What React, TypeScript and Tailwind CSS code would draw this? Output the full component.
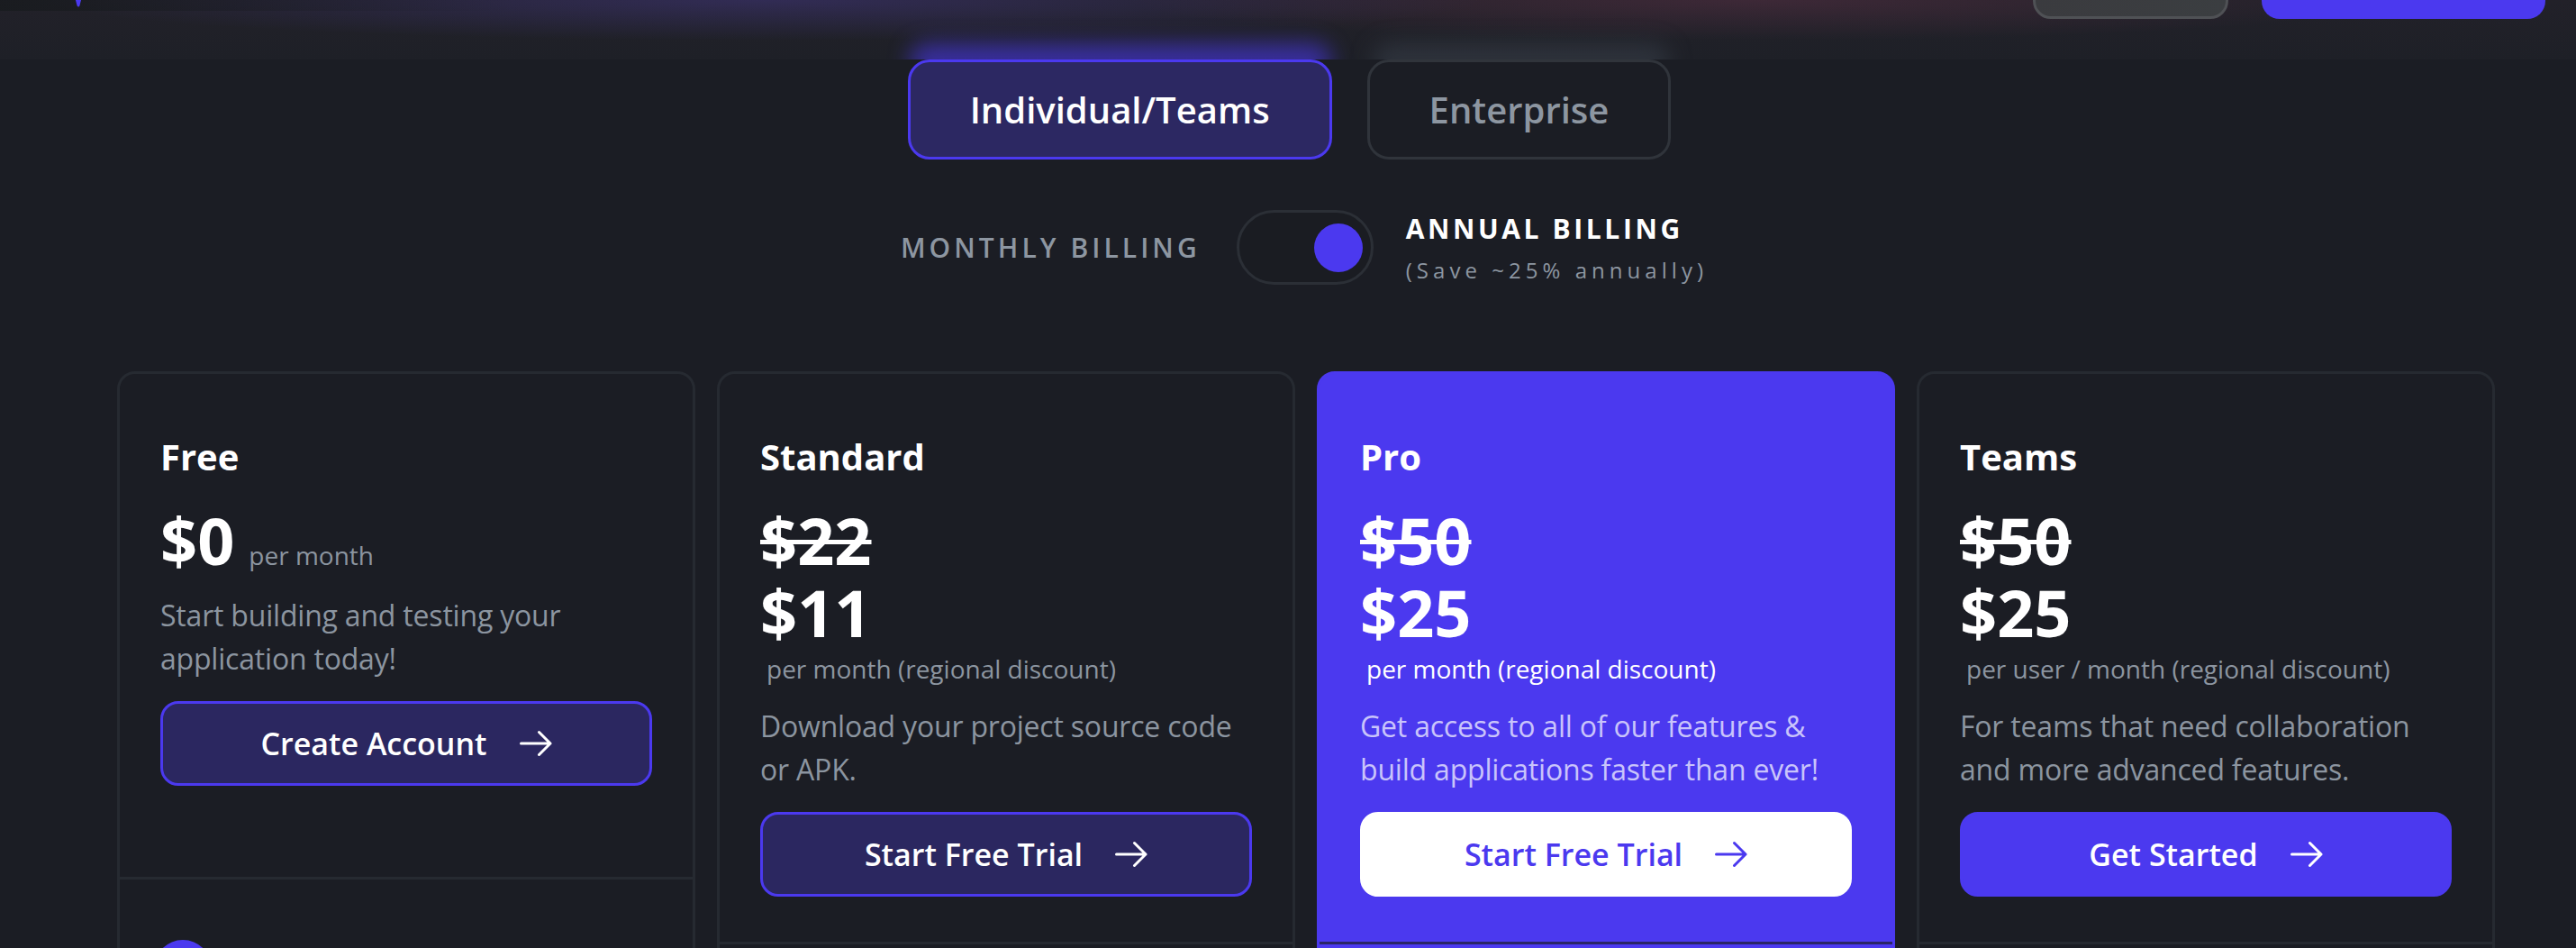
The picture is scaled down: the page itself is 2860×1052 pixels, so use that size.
import React from "react";

const Arrow = ({ className }: { className?: string }) => (
  <svg width="36" height="30" viewBox="0 0 36 30" fill="none" className={className}>
    <path
      d="M1.5 15H34M21.5 2.5L34 15L21.5 27.5"
      stroke="currentColor"
      strokeWidth="3"
      strokeLinecap="round"
      strokeLinejoin="round"
    />
  </svg>
);

type Plan = {
  name: string;
  old?: string;
  price: string;
  unit: string;
  desc: [string, string];
  cta: string;
  variant: "outline" | "white" | "solid";
  highlight?: boolean;
  inline?: boolean;
};

const plans: Plan[] = [
  {
    name: "Free",
    price: "$0",
    unit: "per month",
    desc: ["Start building and testing your", "application today!"],
    cta: "Create Account",
    variant: "outline",
    inline: true,
  },
  {
    name: "Standard",
    old: "$22",
    price: "$11",
    unit: "per month (regional discount)",
    desc: ["Download your project source code", "or APK."],
    cta: "Start Free Trial",
    variant: "outline",
  },
  {
    name: "Pro",
    old: "$50",
    price: "$25",
    unit: "per month (regional discount)",
    desc: ["Get access to all of our features &", "build applications faster than ever!"],
    cta: "Start Free Trial",
    variant: "white",
    highlight: true,
  },
  {
    name: "Teams",
    old: "$50",
    price: "$25",
    unit: "per user / month (regional discount)",
    desc: ["For teams that need collaboration", "and more advanced features."],
    cta: "Get Started",
    variant: "solid",
  },
];

function Card({ p }: { p: Plan }) {
  const hl = p.highlight;
  const btn =
    p.variant === "outline"
      ? "border-[3px] border-[#4b39ef] bg-[#2b2760] text-white"
      : p.variant === "white"
      ? "border-[3px] border-white bg-white text-[#4b39ef]"
      : "border-[3px] border-[#4b39ef] bg-[#4b39ef] text-white";
  return (
    <div
      className={
        hl
          ? "flex flex-col rounded-[20px] border-[3px] border-[#4b39ef] bg-[#4b39ef]"
          : "flex flex-col rounded-[20px] border-[3px] border-[#262a31] bg-[#1b1d24]"
      }
    >
      <div className={p.inline ? "px-[45px] pt-[64px] pb-[101px]" : "px-[45px] pt-[64px] pb-[50px]"}>
        <div className="text-[40px] font-bold leading-[56px] text-white">{p.name}</div>
        {p.inline ? (
          <div className="mt-[24px] flex h-[80px] items-baseline">
            <span className="text-[72px] font-bold leading-[80px] text-white">{p.price}</span>
            <span className="ml-[16px] text-[28px] leading-[40px] text-[#8c95a0]">{p.unit}</span>
          </div>
        ) : (
          <div className="mt-[24px] flex flex-col">
            <s className="block h-[80px] text-[72px] font-bold leading-[80px] text-white decoration-[5px]">
              {p.old}
            </s>
            <span className="block h-[80px] text-[72px] font-bold leading-[80px] text-white">{p.price}</span>
            <span
              className={
                hl
                  ? "mt-[3px] ml-[7px] text-[28px] leading-[40px] text-white"
                  : "mt-[3px] ml-[7px] text-[28px] leading-[40px] text-[#8c95a0]"
              }
            >
              {p.unit}
            </span>
          </div>
        )}
        <p
          className={
            hl
              ? "mt-[20px] text-[32px] leading-[48px] tracking-[-0.2px] text-[#c9c4fb]"
              : "mt-[20px] text-[32px] leading-[48px] tracking-[-0.2px] text-[#8c95a0]"
          }
        >
          {p.desc[0]}
          <br />
          {p.desc[1]}
        </p>
        <button
          className={
            "mt-[23px] flex h-[94px] w-full items-center justify-center gap-[36px] rounded-[20px] text-[34px] font-semibold " +
            btn
          }
        >
          <span>{p.cta}</span>
          <Arrow />
        </button>
      </div>
      <div
        className={
          hl
            ? "flex-1 border-t-[3px] border-[#2a2566] px-[45px] pt-[67px]"
            : "flex-1 border-t-[3px] border-[#262a31] px-[45px] pt-[67px]"
        }
      >
        <div
          className={
            hl
              ? "ml-[-7px] h-[64px] w-[64px] rounded-full bg-white"
              : "ml-[-7px] h-[64px] w-[64px] rounded-full bg-[#4b39ef]"
          }
        />
      </div>
    </div>
  );
}

export default function App() {
  return (
    <div className="h-[1052px] overflow-hidden bg-[#1b1d24] font-['Open_Sans',sans-serif]">
      <header className="relative h-[66px] overflow-hidden bg-[linear-gradient(to_bottom,#222129,#1e2027)]">
        <div className="pointer-events-none absolute inset-0 bg-[radial-gradient(ellipse_800px_45px_at_850px_0px,rgba(95,75,210,0.26),transparent),radial-gradient(ellipse_700px_45px_at_1950px_0px,rgba(170,70,110,0.2),transparent)]" />
        <div className="pointer-events-none absolute inset-x-0 top-0 h-[12px] bg-[linear-gradient(to_right,rgba(20,24,26,0.6),transparent_20%)]" />
        <div className="pointer-events-none absolute bottom-[-22px] left-[1010px] h-[40px] w-[468px] rounded-[20px] bg-[rgba(75,57,239,0.6)] blur-[12px]" />
        <div className="pointer-events-none absolute bottom-[-22px] left-[1524px] h-[40px] w-[330px] rounded-[20px] bg-[rgba(58,66,76,0.55)] blur-[12px]" />
        <div className="relative flex h-[21px] items-end justify-between pl-[78px] pr-[34px]">
          <svg width="18" height="40" viewBox="0 0 18 40" fill="none" className="mb-[13px]">
            <path d="M1.5 8L9 38L16.5 8" stroke="#4b39ef" strokeWidth="3" strokeLinecap="round" strokeLinejoin="round" />
          </svg>
          <div className="flex items-end gap-[37px]">
            <div className="h-[90px] w-[217px] rounded-[20px] border-[3px] border-[#4f5155] bg-[linear-gradient(135deg,#3a3a3e,#3b3e41)]" />
            <div className="h-[90px] w-[315px] rounded-[20px] bg-[#4b39ef]" />
          </div>
        </div>
      </header>

      <main>
        <div className="flex justify-center gap-[39px] pl-[3px]">
          <button className="h-[111px] rounded-[24px] border-[3px] border-[#4b39ef] bg-[#2c2862] px-[66px] text-[40px] font-semibold text-white">
            Individual/Teams
          </button>
          <button className="h-[111px] rounded-[24px] border-[3px] border-[#30343b] bg-[#1b1d24] px-[66px] text-[40px] font-semibold text-[#8d96a1]">
            Enterprise
          </button>
        </div>

        <div className="mt-[56px] flex items-center justify-center pl-[36px]">
          <span className="text-[30px] font-semibold leading-[40px] tracking-[0.135em] text-[#8d96a1]">
            MONTHLY BILLING
          </span>
          <div className="ml-[40px] flex h-[83px] w-[152px] items-center justify-end rounded-full border-[3px] border-[#2b2f36] bg-[#1a1c22] pr-[9px]">
            <div className="h-[54px] w-[54px] rounded-full bg-[#4b39ef]" />
          </div>
          <div className="ml-[36px] flex flex-col">
            <span className="text-[30px] font-bold leading-[40px] tracking-[0.12em] text-white">ANNUAL BILLING</span>
            <span className="mt-[10px] text-[24px] leading-[32px] tracking-[0.21em] text-[#8d96a1]">
              (Save ~25% annually)
            </span>
          </div>
        </div>

        <div className="ml-[130px] mt-[96px] grid w-[2640px] grid-cols-4 gap-[24px]">
          {plans.map((p) => (
            <Card key={p.name} p={p} />
          ))}
        </div>
      </main>
    </div>
  );
}
